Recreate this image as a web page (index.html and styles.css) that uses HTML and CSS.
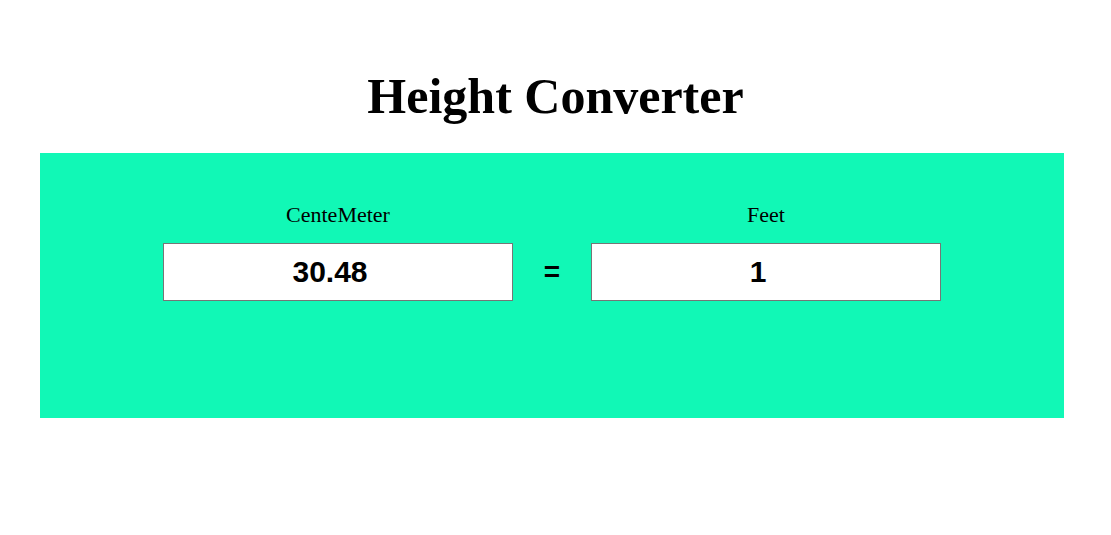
FILE: index.html
```html
<!DOCTYPE html>
<html>
<head>
<meta charset="utf-8">
<link rel="stylesheet" href="styles.css">
</head>
<body>
<h1 class="title">Height Converter</h1>
<div class="panel">
  <div class="row">
    <div class="field">
      <label class="label">CenteMeter</label>
      <input class="input" type="text" value="30.48">
    </div>
    <div class="eq">=</div>
    <div class="field">
      <label class="label">Feet</label>
      <input class="input" type="text" value="1">
    </div>
  </div>
</div>
</body>
</html>
```
FILE: styles.css
```css
html, body {
  margin: 0;
  padding: 0;
  background: #fff;
}
body {
  font-family: "Liberation Serif", "Times New Roman", serif;
  color: #000;
}
.title {
  margin: 0;
  padding-top: 64px;
  height: 89px;
  font-size: 50px;
  line-height: 64px;
  font-weight: bold;
  text-align: center;
}
.panel {
  margin: 0 0 0 40px;
  width: 1024px;
  height: 265px;
  background: #11f8b6;
  box-sizing: border-box;
  padding-top: 49px;
}
.row {
  display: flex;
  justify-content: center;
  align-items: flex-end;
}
.field {
  display: flex;
  flex-direction: column;
  align-items: center;
  width: 350px;
}
.label {
  font-size: 22px;
  line-height: 26px;
  margin-bottom: 15px;
}
.input {
  width: 350px;
  height: 58px;
  box-sizing: border-box;
  border: 1px solid #767676;
  background: #fff;
  font-family: "Liberation Sans", Arial, sans-serif;
  font-weight: bold;
  font-size: 30px;
  text-align: center;
  padding: 0 16px 0 0;
  margin: 0;
  outline: none;
  color: #000;
}
.eq {
  width: 78px;
  height: 58px;
  display: flex;
  align-items: center;
  justify-content: center;
  font-family: "Liberation Sans", Arial, sans-serif;
  font-weight: bold;
  font-size: 28px;
}
```
